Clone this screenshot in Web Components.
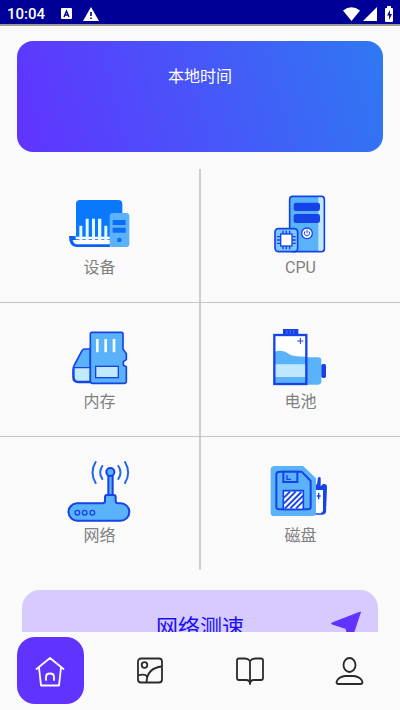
<!DOCTYPE html>
<html lang="zh-CN">
<head>
<meta charset="utf-8">
<meta name="viewport" content="width=device-width, initial-scale=1">
<title>设备信息</title>
<style>
  html, body {
    height: 100%;
    margin: 0;
  }

  body {
    background: #fafafa;
    font-family: Roboto, "Noto Sans CJK SC", sans-serif;
  }
</style>
</head>
<body>
<device-app></device-app>

<script>
// 图标库，线条和填充都在各自的坐标里
const ICONS = {
  device: {
    box: '21 9 195 192',
    body: `
      <path d="M48 140V42q0-12 12-12H175q12 0 12 12V140z" fill="#0a78fb"/>
      <path d="M27 138h20v10H150v23H48Q27 169 27 138z" fill="#0a62f5"/>
      <path d="M58 107h9v44h-9zM77 86h9v65h-9zM96 86h9v65h-9zM114 86h10v65h-10zM133 107h9v44h-9z" fill="#e4f7ff"/>
      <path d="M38 150H152v13H50Q41 162 38 150z" fill="#fff"/>
      <rect x="149" y="69" width="59" height="102" rx="10" fill="#5bb2fa"/>
      <path d="M158 90h39v15h-39zM158 113h39v15h-39z" fill="#0a6df5"/>
      <circle cx="178" cy="150" r="7" fill="#0a6df5"/>`
  },
  cpu: {
    box: '9 9 195 192',
    body: `
      <rect x="74" y="19" width="104" height="166" rx="9" fill="#5ab3f8" stroke="#1543e8" stroke-width="5"/>
      <path d="M160 22h9q6 0 6 7V176q0 6-6 6h-9z" fill="#c2e7ff"/>
      <rect x="86" y="38" width="79" height="25" rx="7" fill="#1543e8"/>
      <rect x="86" y="72" width="79" height="27" rx="7" fill="#1543e8"/>
      <circle cx="126" cy="130" r="16" fill="#fff" stroke="#1543e8" stroke-width="4"/>
      <path d="M120 124a8 8 0 1 0 12 0M126 119v11" fill="none" stroke="#1543e8" stroke-width="3"/>
      <rect x="30" y="116" width="68" height="69" rx="10" fill="#7cc5ff" stroke="#1543e8" stroke-width="5"/>
      <path d="M54 122v10M64 122v10M74 122v10M54 168v10M64 168v10M74 168v10M36 140h10M36 150h10M36 160h10M82 140h10M82 150h10M82 160h10" stroke="#1543e8" stroke-width="4"/>
      <rect x="47" y="132" width="34" height="36" fill="#fff" stroke="#1543e8" stroke-width="4"/>`
  },
  memory: {
    box: '21 21 195 192',
    body: `
      <path d="M91 87H74q-5 0-8 5L43 135q-4 8-4 14v22q0 16 16 16h36z" fill="#5ab3f8" stroke="#1543e8" stroke-width="5"/>
      <path d="M91 143H42v27q0 14 13 14h36z" fill="#c2eaff" stroke="#1543e8" stroke-width="4"/>
      <path d="M96 37h88q5 0 5 5v45l10 14v18l-9 6v10l9 5v44q0 6-6 6H98q-7 0-7-6V42q0-5 5-5z" fill="#5ab3f8" stroke="#1543e8" stroke-width="5" stroke-linejoin="round"/>
      <path d="M112 57v40M137 57v40M162 57v40" stroke="#f2fbff" stroke-width="8"/>
      <rect x="107" y="139" width="68" height="34" fill="#c2eaff" stroke="#1543e8" stroke-width="4"/>`
  },
  battery: {
    box: '9 21 195 192',
    body: `
      <rect x="118" y="112" width="51" height="82" rx="10" fill="#5ab3f8"/>
      <rect x="169" y="132" width="14" height="42" rx="5" fill="#1543e8"/>
      <path d="M54 27h46v18H54z" fill="#1543e8"/>
      <path d="M66 30v12M76 30v12M86 30v12" stroke="#5b8bf8" stroke-width="2"/>
      <rect x="28" y="45" width="96" height="147" fill="#fff"/>
      <path d="M28 96q24-10 44 6 10 8 52 8v82H28z" fill="#5ab3f8"/>
      <path d="M28 133h96v38H28z" fill="#bfe8ff"/>
      <rect x="28" y="45" width="96" height="147" fill="none" stroke="#1543e8" stroke-width="7"/>
      <path d="M97 63h18M106 54v18" stroke="#1543e8" stroke-width="3"/>`
  },
  network: {
    box: '21 15 195 192',
    body: `
      <g fill="#5ab3f8" stroke="#1543e8" stroke-width="6">
        <path d="M145 58h13v62h-13z"/>
        <circle cx="151" cy="48" r="12"/>
        <path d="M50 142h77q8 0 8-7v-12q0-6 6-6h20q6 0 6 6v12q0 7 8 7h7a26 26 0 0 1 0 52H53a26 26 0 0 1-3-52z"/>
      </g>
      <g fill="none" stroke="#1543e8" stroke-width="4">
        <circle cx="52" cy="170" r="7"/>
        <circle cx="74" cy="170" r="7"/>
        <circle cx="97" cy="170" r="7"/>
      </g>
      <path d="M107 18q-19 31 0 63M127 30q-13 19 0 39M175 30q13 19 0 39M195 18q19 31 0 63" fill="none" stroke="#2465ee" stroke-width="6" stroke-linecap="round"/>`
  },
  disk: {
    box: '9 18 195 192',
    body: `
      <path d="M147 95l9-8 3-19q4-4 8 0v26l7-7q12-2 12 9l-3 76q-2 7-11 7h-29z" fill="#1543e8"/>
      <path d="M146 105h28v63l-6 7h-22z" fill="#fff"/>
      <path d="M161 113v20M155 123h12" stroke="#1543e8" stroke-width="4"/>
      <path d="M29 33h85l39 37v104q0 9-9 9H27q-10 0-10-10V44q0-11 12-11z" fill="#5ab3f8"/>
      <path d="M44 50h66l27 28v78q0 7-7 7H42q-8 0-8-7V59q0-9 10-9z" fill="#5ab3f8" stroke="#1543e8" stroke-width="6"/>
      <path d="M55 50h42v31H55z" fill="#5ab3f8" stroke="#1543e8" stroke-width="6"/>
      <path d="M66 60v13h12" fill="none" stroke="#1543e8" stroke-width="4"/>
      <path d="M55 109h60v53H55z" fill="#fff"/>
      <path d="M57 128l18-18M57 145l35-35M60 160l49-49M76 160l38-38M93 160l21-21" stroke="#1543e8" stroke-width="6"/>
      <path d="M55 107h60v56H55z" fill="none" stroke="#1543e8" stroke-width="5"/>`
  },
  home: {
    box: '0 0 32 32',
    body: `<path d="M2.500 14L5 12 16 3l11 9 2.500 2M5 12.500l2 18h18l2-18M12 25v-3q0-3.500 4-3.500t4 3.500v3" fill="none" stroke="currentColor" stroke-width="1.800" stroke-linecap="round" stroke-linejoin="round"/>`
  },
  picture: {
    box: '0 0 32 32',
    body: `<g fill="none" stroke="currentColor" stroke-width="1.800">
      <rect x="4" y="3.500" width="24" height="24" rx="3"/>
      <circle cx="10.500" cy="10" r="2.800"/>
      <path d="M28 11.500Q13 13 12.500 27.500M4 20.500q7-2 9 1"/></g>`
  },
  book: {
    box: '0 0 32 32',
    body: `<path d="M16 6Q14 3.500 11 3.500H5Q3 3.500 3 5.500v17.500q0 2 2 2h7q4 0 4 4 0-4 4-4h7q2 0 2-2V5.500q0-2-2-2h-6q-3 0-5 2.500zV29" fill="none" stroke="currentColor" stroke-width="1.800" stroke-linejoin="round"/>`
  },
  user: {
    box: '0 0 32 32',
    body: `<g fill="none" stroke="currentColor" stroke-width="1.800" stroke-linejoin="round">
      <ellipse cx="15.500" cy="10" rx="6" ry="7"/>
      <path d="M11 21h9q7 1 8.500 6 0 2-2 2h-22q-2 0-2-2 1.500-5 8.500-6z"/></g>`
  },
  send: {
    box: '0 0 30 30',
    body: `<path d="M29.500 2L20.500 29q-1 2-2 0L15 19q0-1-1.500-1L1 14q-1-.500 0-1z" fill="currentColor" stroke="currentColor" stroke-linejoin="round"/>`
  },
  input: {
    box: '0 0 12 12',
    body: `<rect width="11" height="11" rx="1" fill="#fff"/>
      <path d="M3 9l2.500-6L8 9M4 7h3" fill="none" stroke="#000096" stroke-width="1.400"/>`
  },
  warning: {
    box: '0 0 16 14',
    body: `<path d="M8 0l8 14H0z" fill="#fff"/><path d="M8 5v4M8 10.500v1.500" stroke="#000096" stroke-width="1.600"/>`
  },
  wifi: {
    box: '0 0 17 14',
    body: `<path d="M0 3.500Q8.500-3 17 3.500L8.500 14z" fill="#fff"/>`
  },
  signal: {
    box: '0 0 14 14',
    body: `<path d="M14 0v14H0z" fill="#fff"/>`
  },
  charge: {
    box: '0 0 10 16',
    body: `<path d="M3 0h4v2h1q1 0 1 1v12q0 1-1 1H2q-1 0-1-1V3q0-1 1-1h1z" fill="#fff"/>
      <path d="M6 4L3 9.500h2V14l3-6H6z" fill="#000096"/>`
  }
};

class AppIcon extends HTMLElement {
  constructor() {
    super();
    this.attachShadow({ mode: 'open' });
  }

  connectedCallback() {
    const icon = ICONS[this.getAttribute('name')];
    this.shadowRoot.innerHTML = `
      <style>
        :host {
          display: block;
          flex: none;
        }

        svg {
          display: block;
          width: 100%;
          height: 100%;
        }
      </style>
      <svg viewBox="${icon.box}" aria-hidden="true">${icon.body}</svg>
    `;
  }
}

class StatusBar extends HTMLElement {
  constructor() {
    super();
    this.attachShadow({ mode: 'open' });
    this.shadowRoot.innerHTML = `
      <style>
        :host {
          display: flex;
          align-items: center;
          box-sizing: border-box;
          height: 26px;
          padding: 3px 6px 0 7px;
          background: #000096;
          border-bottom: 2px solid #9c9a94;
          color: #fff;
          font-size: 15px;
          font-weight: 500;
          line-height: 20px;
        }

        .time {
          margin-right: 16px;
        }

        .left, .right {
          display: flex;
          align-items: center;
        }

        .left {
          flex: 1;
          gap: 10px;
        }

        .right {
          gap: 3px;
        }

        .input { width: 12px; height: 12px; }
        .warning { width: 16px; height: 14px; }
        .wifi { width: 17px; height: 14px; }
        .signal { width: 14px; height: 14px; }
        .charge { width: 10px; height: 16px; margin-left: 4px; }
      </style>
      <span class="time">10:04</span>
      <div class="left">
        <app-icon class="input" name="input"></app-icon>
        <app-icon class="warning" name="warning"></app-icon>
      </div>
      <div class="right">
        <app-icon class="wifi" name="wifi"></app-icon>
        <app-icon class="signal" name="signal"></app-icon>
        <app-icon class="charge" name="charge"></app-icon>
      </div>
    `;
  }
}

class TimeCard extends HTMLElement {
  constructor() {
    super();
    this.attachShadow({ mode: 'open' });
    this.shadowRoot.innerHTML = `
      <style>
        :host {
          display: block;
          box-sizing: border-box;
          min-height: 111px;
          margin: 15px 17px 17px;
          padding: 24px 16px;
          border-radius: 16px;
          background: linear-gradient(75deg, #6133ff, #2f78f2);
          color: #fff;
          font-size: 16px;
          line-height: 24px;
          text-align: center;
        }
      </style>
      <slot></slot>
    `;
  }
}

class InfoTile extends HTMLElement {
  constructor() {
    super();
    this.attachShadow({ mode: 'open' });
  }

  connectedCallback() {
    this.shadowRoot.innerHTML = `
      <style>
        :host {
          display: block;
        }

        button {
          display: flex;
          flex-direction: column;
          align-items: center;
          justify-content: center;
          width: 100%;
          height: 133px;
          padding: 0;
          border: none;
          background: none;
          color: #808080;
          font: inherit;
          font-size: 16px;
          line-height: 22px;
          cursor: pointer;
        }

        app-icon {
          width: 65px;
          height: 64px;
        }
      </style>
      <button type="button">
        <app-icon name="${this.getAttribute('icon')}"></app-icon>
        <slot></slot>
      </button>
    `;
  }
}

class TileGrid extends HTMLElement {
  constructor() {
    super();
    this.attachShadow({ mode: 'open' });
    this.shadowRoot.innerHTML = `
      <style>
        :host {
          display: grid;
          grid-template-columns: 1fr 1fr;
        }

        ::slotted(*) {
          border-bottom: 1px solid #c6c6c6;
        }

        ::slotted(:nth-child(odd)) {
          border-right: 1px solid #cecece;
        }

        ::slotted(:nth-child(even)) {
          border-left: 1px solid #cecece;
        }

        ::slotted(:nth-last-child(-n+2)) {
          border-bottom: none;
        }
      </style>
      <slot></slot>
    `;
  }
}

class SpeedButton extends HTMLElement {
  constructor() {
    super();
    this.attachShadow({ mode: 'open' });
    this.shadowRoot.innerHTML = `
      <style>
        :host {
          display: block;
          margin: 20px 22px;
        }

        button {
          display: grid;
          grid-template-columns: 30px 1fr 30px;
          align-items: center;
          width: 100%;
          height: 70px;
          padding: 0 17px;
          border: none;
          border-radius: 18px;
          background: #d7caff;
          color: #1a10f5;
          font: inherit;
          font-size: 22px;
          cursor: pointer;
        }

        .text {
          grid-column: 2;
        }

        app-icon {
          width: 30px;
          height: 30px;
          color: #6133ff;
        }
      </style>
      <button type="button">
        <span class="text"><slot></slot></span>
        <app-icon name="send"></app-icon>
      </button>
    `;
  }
}

class NavItem extends HTMLElement {
  constructor() {
    super();
    this.attachShadow({ mode: 'open' });
  }

  connectedCallback() {
    this.shadowRoot.innerHTML = `
      <style>
        :host {
          display: flex;
          flex: 1;
          justify-content: center;
        }

        button {
          display: flex;
          align-items: center;
          justify-content: center;
          width: 67px;
          height: 67px;
          padding: 0;
          border: none;
          border-radius: 18px;
          background: none;
          color: #2a2a2a;
          cursor: pointer;
        }

        :host([active]) button {
          background: #6133ff;
          color: #fff;
        }

        app-icon {
          width: 32px;
          height: 32px;
        }
      </style>
      <button type="button" aria-label="${this.getAttribute('label')}">
        <app-icon name="${this.getAttribute('icon')}"></app-icon>
      </button>
    `;
  }
}

class BottomNav extends HTMLElement {
  constructor() {
    super();
    this.attachShadow({ mode: 'open' });
    this.shadowRoot.innerHTML = `
      <style>
        nav {
          display: flex;
          padding: 5px 0 6px;
          background: #fafafa;
        }
      </style>
      <nav><slot></slot></nav>
    `;
  }
}

class DeviceApp extends HTMLElement {
  constructor() {
    super();
    this.attachShadow({ mode: 'open' });
    this.shadowRoot.innerHTML = `
      <style>
        :host {
          display: flex;
          flex-direction: column;
          height: 100vh;
        }

        status-bar, bottom-nav {
          flex: none;
        }

        bottom-nav {
          display: block;
        }

        main {
          flex: 1;
          min-height: 0;
          overflow-y: auto;
          scrollbar-width: none;
        }
      </style>
      <status-bar></status-bar>
      <main>
        <time-card>本地时间</time-card>
        <tile-grid>
          <info-tile icon="device">设备</info-tile>
          <info-tile icon="cpu">CPU</info-tile>
          <info-tile icon="memory">内存</info-tile>
          <info-tile icon="battery">电池</info-tile>
          <info-tile icon="network">网络</info-tile>
          <info-tile icon="disk">磁盘</info-tile>
        </tile-grid>
        <speed-button>网络测速</speed-button>
      </main>
      <bottom-nav>
        <nav-item icon="home" label="首页" active></nav-item>
        <nav-item icon="picture" label="图片"></nav-item>
        <nav-item icon="book" label="阅读"></nav-item>
        <nav-item icon="user" label="我的"></nav-item>
      </bottom-nav>
    `;
  }
}

customElements.define('app-icon', AppIcon);
customElements.define('status-bar', StatusBar);
customElements.define('time-card', TimeCard);
customElements.define('info-tile', InfoTile);
customElements.define('tile-grid', TileGrid);
customElements.define('speed-button', SpeedButton);
customElements.define('nav-item', NavItem);
customElements.define('bottom-nav', BottomNav);
customElements.define('device-app', DeviceApp);
</script>
</body>
</html>
